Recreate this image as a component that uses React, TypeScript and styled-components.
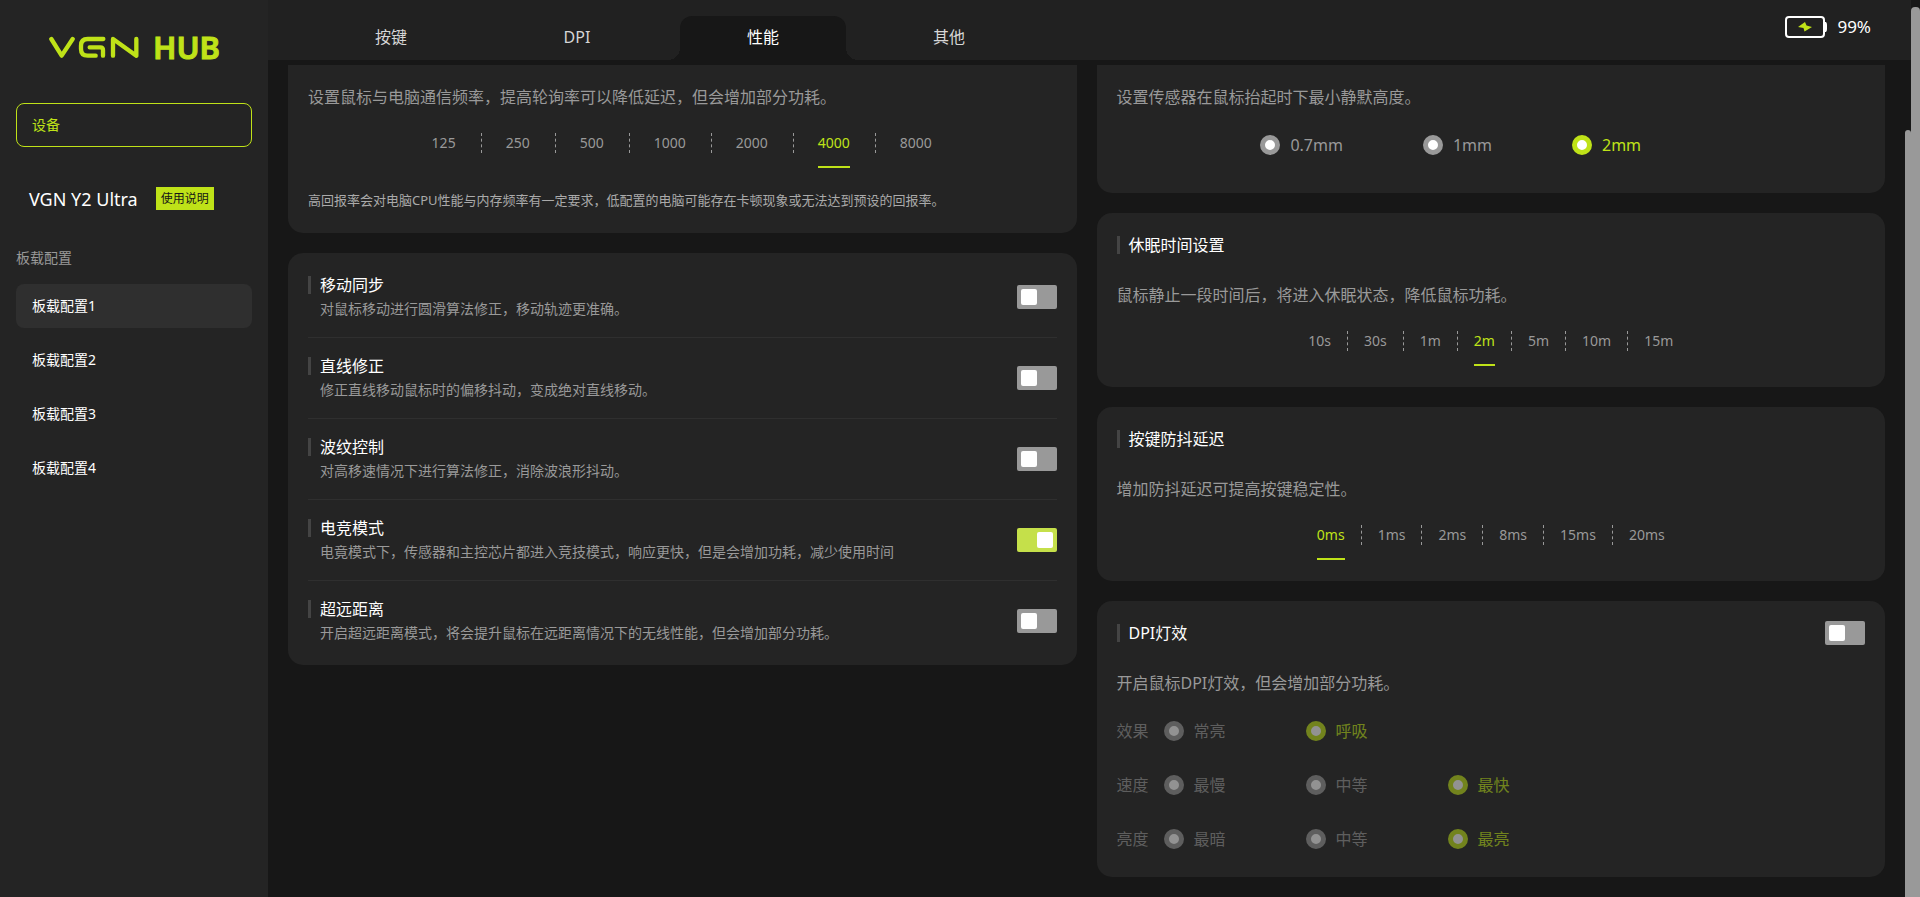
import { useState } from "react";
import styled, { createGlobalStyle, css } from "styled-components";

const LIME = "#bfe218";
const PANEL = "#242424";
const PAGE = "#171717";
const MUTED = "#999999";

const GlobalStyle = createGlobalStyle`
  *, *::before, *::after { box-sizing: border-box; }
  body {
    margin: 0;
    background: ${PAGE};
    color: #ffffff;
    font-family: "Noto Sans", "Noto Sans CJK SC", sans-serif;
    font-size: 16px;
    line-height: 24px;
  }
  button, input { font: inherit; color: inherit; }
  h1, h2, p, ul, fieldset { margin: 0; padding: 0; border: 0; }
  ul { list-style: none; }
`;

const Shell = styled.div`
  display: grid;
  grid-template-columns: 268px minmax(0, 1fr) 9px;
  height: 100vh;
  overflow: hidden;
`;

const Sidebar = styled.aside`
  display: flex;
  flex-direction: column;
  padding: 0 16px;
  background: ${PANEL};
`;

const Brand = styled.h1`
  display: flex;
  align-items: center;
  gap: 14px;
  height: 24px;
  margin: 35px 0 44px 33px;
  color: ${LIME};
`;

const BrandMark = styled.svg`
  width: 90px;
  height: 22px;
`;

const BrandWord = styled.span`
  font-size: 31px;
  font-weight: 600;
  line-height: 24px;
  -webkit-text-stroke: 1px ${LIME};
`;

const navButton = css`
  display: flex;
  align-items: center;
  width: 100%;
  height: 44px;
  padding: 0 16px;
  border: 0;
  border-radius: 8px;
  background: transparent;
  font-size: 14px;
  text-align: left;
  cursor: pointer;
`;

const DeviceButton = styled.button`
  ${navButton}
  padding: 0 15px;
  border: 1px solid ${LIME};
  color: ${LIME};
`;

const DeviceRow = styled.div`
  display: flex;
  align-items: center;
  gap: 18px;
  height: 23px;
  margin: 40px 0 36px;
  padding-left: 13px;
`;

const DeviceName = styled.span`
  font-size: 18px;
`;

const ManualLink = styled.a`
  padding: 0 5px;
  background: ${LIME};
  color: #161616;
  font-size: 12px;
  line-height: 23px;
  text-decoration: none;
`;

const SectionLabel = styled.p`
  margin-bottom: 14px;
  color: ${MUTED};
  font-size: 14px;
`;

const ProfileList = styled.ul`
  display: flex;
  flex-direction: column;
  gap: 10px;
`;

const ProfileButton = styled.button<{ $active: boolean }>`
  ${navButton}
  background: ${(p) => (p.$active ? "#2f2f2f" : "transparent")};
`;

const Main = styled.main`
  display: flex;
  flex-direction: column;
  min-width: 0;
`;

const Header = styled.header`
  display: flex;
  justify-content: space-between;
  flex: none;
  height: 60px;
  padding: 16px 40px 0;
  background: #212121;
`;

const Tabs = styled.nav`
  display: flex;
  gap: 20px;
`;

const Tab = styled.button<{ $active: boolean }>`
  position: relative;
  width: 166px;
  height: 44px;
  padding: 0 0 2px;
  border: 0;
  border-radius: 12px 12px 0 0;
  background: ${(p) => (p.$active ? PAGE : "transparent")};
  color: ${(p) => (p.$active ? "#ffffff" : "#d6d6d6")};
  cursor: pointer;

  ${(p) =>
    p.$active &&
    css`
      &::before,
      &::after {
        content: "";
        position: absolute;
        bottom: 0;
        width: 12px;
        height: 12px;
      }
      &::before {
        right: 100%;
        background: radial-gradient(circle at 0 0, transparent 12px, ${PAGE} 12px);
      }
      &::after {
        left: 100%;
        background: radial-gradient(circle at 100% 0, transparent 12px, ${PAGE} 12px);
      }
    `}
`;

const Battery = styled.div`
  display: flex;
  align-items: center;
  gap: 10px;
  height: 22px;
  font-size: 17px;
`;

const BatteryIcon = styled.svg`
  width: 42px;
  height: 22px;
`;

const Body = styled.div`
  display: grid;
  grid-template-columns: minmax(0, 1fr) 6px;
  flex: 1;
  min-height: 0;
  margin-top: 5px;
`;

const Columns = styled.div`
  display: grid;
  grid-template-columns: minmax(0, 1fr) minmax(0, 1fr);
  align-items: start;
  gap: 20px;
  padding: 0 20px;
`;

const Column = styled.div`
  display: flex;
  flex-direction: column;
  gap: 20px;
`;

const Card = styled.section<{ $cut?: boolean; $list?: boolean }>`
  padding: ${(p) => (p.$list ? "4px 20px" : p.$cut ? "18px 20px 20px" : "20px")};
  border-radius: ${(p) => (p.$cut ? "0 0 15px 15px" : "15px")};
  background: ${PANEL};
`;

const CardHead = styled.div`
  display: flex;
  align-items: center;
  justify-content: space-between;
  height: 24px;
  margin-bottom: 24px;
`;

const Title = styled.h2`
  display: flex;
  align-items: center;
  gap: 9px;
  font-size: 16px;
  font-weight: 400;

  &::before {
    content: "";
    width: 3px;
    height: 18px;
    background: #444444;
  }
`;

const Lead = styled.p`
  margin-bottom: 22px;
  color: ${MUTED};
  line-height: 28px;
`;

const Note = styled.p`
  margin: 20px 0 2px;
  color: #aaaaaa;
  font-size: 13px;
  line-height: 22px;
`;

const Options = styled.ul`
  display: flex;
  justify-content: center;
  height: 36px;
`;

const OptionItem = styled.li<{ $wide?: boolean }>`
  display: flex;
  padding-left: ${(p) => (p.$wide ? 24 : 16)}px;

  &::after {
    content: "";
    height: 20px;
    margin-left: ${(p) => (p.$wide ? 25 : 16)}px;
    border-left: 1px dashed ${MUTED};
  }
  &:last-child::after {
    border-left: 0;
  }
`;

const OptionButton = styled.button<{ $active: boolean }>`
  height: 35px;
  padding: 0 0 13px;
  border: 0;
  border-bottom: 2px solid ${(p) => (p.$active ? LIME : "transparent")};
  background: transparent;
  color: ${(p) => (p.$active ? LIME : MUTED)};
  font-size: 14px;
  line-height: 20px;
  cursor: pointer;
`;

const SettingRow = styled.div`
  display: flex;
  align-items: center;
  justify-content: space-between;
  height: 81px;
  border-bottom: 1px solid #2f2f2f;

  &:last-child {
    height: 80px;
    border-bottom: 0;
  }
`;

const SettingText = styled.p`
  padding-left: 12px;
  color: ${MUTED};
  font-size: 14px;
`;

const Switch = styled.input`
  appearance: none;
  flex: none;
  width: 40px;
  height: 24px;
  margin: 0;
  padding: 4px;
  border-radius: 2px;
  background: ${MUTED};
  cursor: pointer;

  &::before {
    content: "";
    display: block;
    width: 16px;
    height: 16px;
    border-radius: 2px;
    background: #ffffff;
  }
  &:checked {
    background: #c5e04a;
  }
  &:checked::before {
    margin-left: 16px;
  }
`;

const HeightChoices = styled.fieldset`
  display: flex;
  justify-content: center;
  gap: 80px;
  padding: 0 80px 16px 0;
`;

const LightRows = styled.div<{ $off: boolean }>`
  display: flex;
  flex-direction: column;
  gap: 30px;
  padding-bottom: 6px;
  opacity: ${(p) => (p.$off ? 0.5 : 1)};
`;

const LightRow = styled.fieldset`
  display: flex;
  align-items: center;
  height: 24px;
`;

const LightLabel = styled.span`
  width: 47px;
  color: ${MUTED};
`;

const RadioLabel = styled.label<{ $active: boolean; $fixed?: boolean }>`
  display: flex;
  align-items: center;
  gap: 10px;
  width: ${(p) => (p.$fixed ? "142px" : "auto")};
  color: ${(p) => (p.$active ? LIME : MUTED)};
`;

const Radio = styled.input`
  appearance: none;
  width: 20px;
  height: 20px;
  margin: 0;
  border: 5px solid ${MUTED};
  border-radius: 50%;
  background: #ffffff;

  &:checked {
    border-color: ${LIME};
  }
`;

const Track = styled.div<{ $top: number }>`
  padding-top: ${(p) => p.$top}px;
`;

const Thumb = styled.div`
  height: 100%;
  border-radius: 4px 4px 0 0;
  background: ${MUTED};
`;

const TABS = ["按键", "DPI", "性能", "其他"];
const PROFILES = ["板载配置1", "板载配置2", "板载配置3", "板载配置4"];
const HEIGHTS = ["0.7mm", "1mm", "2mm"];

const SETTINGS = [
  { title: "移动同步", text: "对鼠标移动进行圆滑算法修正，移动轨迹更准确。", on: false },
  { title: "直线修正", text: "修正直线移动鼠标时的偏移抖动，变成绝对直线移动。", on: false },
  { title: "波纹控制", text: "对高移速情况下进行算法修正，消除波浪形抖动。", on: false },
  {
    title: "电竞模式",
    text: "电竟模式下，传感器和主控芯片都进入竞技模式，响应更快，但是会增加功耗，减少使用时间",
    on: true,
  },
  {
    title: "超远距离",
    text: "开启超远距离模式，将会提升鼠标在远距离情况下的无线性能，但会增加部分功耗。",
    on: false,
  },
];

const LIGHTS = [
  { label: "效果", choices: ["常亮", "呼吸"], value: "呼吸" },
  { label: "速度", choices: ["最慢", "中等", "最快"], value: "最快" },
  { label: "亮度", choices: ["最暗", "中等", "最亮"], value: "最亮" },
];

function OptionBar({
  values,
  initial,
  wide,
}: {
  values: string[];
  initial: string;
  wide?: boolean;
}) {
  const [value, setValue] = useState(initial);
  return (
    <Options>
      {values.map((v) => (
        <OptionItem key={v} $wide={wide}>
          <OptionButton
            type="button"
            $active={v === value}
            aria-pressed={v === value}
            onClick={() => setValue(v)}
          >
            {v}
          </OptionButton>
        </OptionItem>
      ))}
    </Options>
  );
}

function RadioChoices({
  name,
  values,
  initial,
  fixed,
  disabled,
}: {
  name: string;
  values: string[];
  initial: string;
  fixed?: boolean;
  disabled?: boolean;
}) {
  const [value, setValue] = useState(initial);
  return (
    <>
      {values.map((v) => (
        <RadioLabel key={v} $active={v === value} $fixed={fixed}>
          <Radio
            type="radio"
            name={name}
            disabled={disabled}
            checked={v === value}
            onChange={() => setValue(v)}
          />
          {v}
        </RadioLabel>
      ))}
    </>
  );
}

export default function App() {
  const [tab, setTab] = useState("性能");
  const [profile, setProfile] = useState(PROFILES[0]);
  const [lightOn, setLightOn] = useState(false);

  return (
    <>
      <GlobalStyle />
      <Shell>
        <Sidebar>
          <Brand>
            <BrandMark viewBox="12 18 270 66" role="img" aria-label="VGN">
              <g
                fill="none"
                stroke="currentColor"
                strokeWidth="13"
                strokeLinecap="round"
                strokeLinejoin="round"
              >
                <path d="M19 27 50 77 83 27" />
                <path d="M175 27H128Q108 27 108 47V57Q108 77 128 77H152M134 52H166Q174 52 174 60V77" />
                <path d="M204 77V27L274 77V27" />
              </g>
            </BrandMark>
            <BrandWord>HUB</BrandWord>
          </Brand>
          <DeviceButton type="button">设备</DeviceButton>
          <DeviceRow>
            <DeviceName>VGN Y2 Ultra</DeviceName>
            <ManualLink href="#manual">使用说明</ManualLink>
          </DeviceRow>
          <SectionLabel>板载配置</SectionLabel>
          <ProfileList>
            {PROFILES.map((p) => (
              <li key={p}>
                <ProfileButton type="button" $active={p === profile} onClick={() => setProfile(p)}>
                  {p}
                </ProfileButton>
              </li>
            ))}
          </ProfileList>
        </Sidebar>

        <Main>
          <Header>
            <Tabs>
              {TABS.map((t) => (
                <Tab key={t} type="button" $active={t === tab} onClick={() => setTab(t)}>
                  {t}
                </Tab>
              ))}
            </Tabs>
            <Battery>
              <BatteryIcon viewBox="0 0 42 22" aria-hidden="true">
                <rect x="1" y="1" width="38" height="20" rx="3" fill="none" stroke="#fff" strokeWidth="2" />
                <path d="M40 6h1q1 1 1 3v4q0 2-1 3h-1z" fill="#fff" />
                <path d="M20 6 21.500 9.500 27 11 19.500 15.500 18.500 12 13 11z" fill={LIME} />
              </BatteryIcon>
              <span>99%</span>
            </Battery>
          </Header>

          <Body>
            <Columns>
              <Column>
                <Card $cut>
                  <Lead>设置鼠标与电脑通信频率，提高轮询率可以降低延迟，但会增加部分功耗。</Lead>
                  <OptionBar
                    values={["125", "250", "500", "1000", "2000", "4000", "8000"]}
                    initial="4000"
                    wide
                  />
                  <Note>
                    高回报率会对电脑CPU性能与内存频率有一定要求，低配置的电脑可能存在卡顿现象或无法达到预设的回报率。
                  </Note>
                </Card>
                <Card $list>
                  {SETTINGS.map((s) => (
                    <SettingRow key={s.title}>
                      <div>
                        <Title>{s.title}</Title>
                        <SettingText>{s.text}</SettingText>
                      </div>
                      <Switch type="checkbox" role="switch" aria-label={s.title} defaultChecked={s.on} />
                    </SettingRow>
                  ))}
                </Card>
              </Column>

              <Column>
                <Card $cut>
                  <Lead>设置传感器在鼠标抬起时下最小静默高度。</Lead>
                  <HeightChoices>
                    <RadioChoices name="height" values={HEIGHTS} initial="2mm" />
                  </HeightChoices>
                </Card>
                <Card>
                  <CardHead>
                    <Title>休眠时间设置</Title>
                  </CardHead>
                  <Lead>鼠标静止一段时间后，将进入休眠状态，降低鼠标功耗。</Lead>
                  <OptionBar
                    values={["10s", "30s", "1m", "2m", "5m", "10m", "15m"]}
                    initial="2m"
                  />
                </Card>
                <Card>
                  <CardHead>
                    <Title>按键防抖延迟</Title>
                  </CardHead>
                  <Lead>增加防抖延迟可提高按键稳定性。</Lead>
                  <OptionBar
                    values={["0ms", "1ms", "2ms", "8ms", "15ms", "20ms"]}
                    initial="0ms"
                  />
                </Card>
                <Card>
                  <CardHead>
                    <Title>DPI灯效</Title>
                    <Switch
                      type="checkbox"
                      role="switch"
                      aria-label="DPI灯效"
                      checked={lightOn}
                      onChange={(e) => setLightOn(e.target.checked)}
                    />
                  </CardHead>
                  <Lead>开启鼠标DPI灯效，但会增加部分功耗。</Lead>
                  <LightRows $off={!lightOn}>
                    {LIGHTS.map((l) => (
                      <LightRow key={l.label} aria-label={l.label}>
                        <LightLabel>{l.label}</LightLabel>
                        <RadioChoices
                          name={l.label}
                          values={l.choices}
                          initial={l.value}
                          disabled={!lightOn}
                          fixed
                        />
                      </LightRow>
                    ))}
                  </LightRows>
                </Card>
              </Column>
            </Columns>
            <Track $top={65} aria-hidden="true">
              <Thumb />
            </Track>
          </Body>
        </Main>

        <Track $top={7} aria-hidden="true">
          <Thumb />
        </Track>
      </Shell>
    </>
  );
}
